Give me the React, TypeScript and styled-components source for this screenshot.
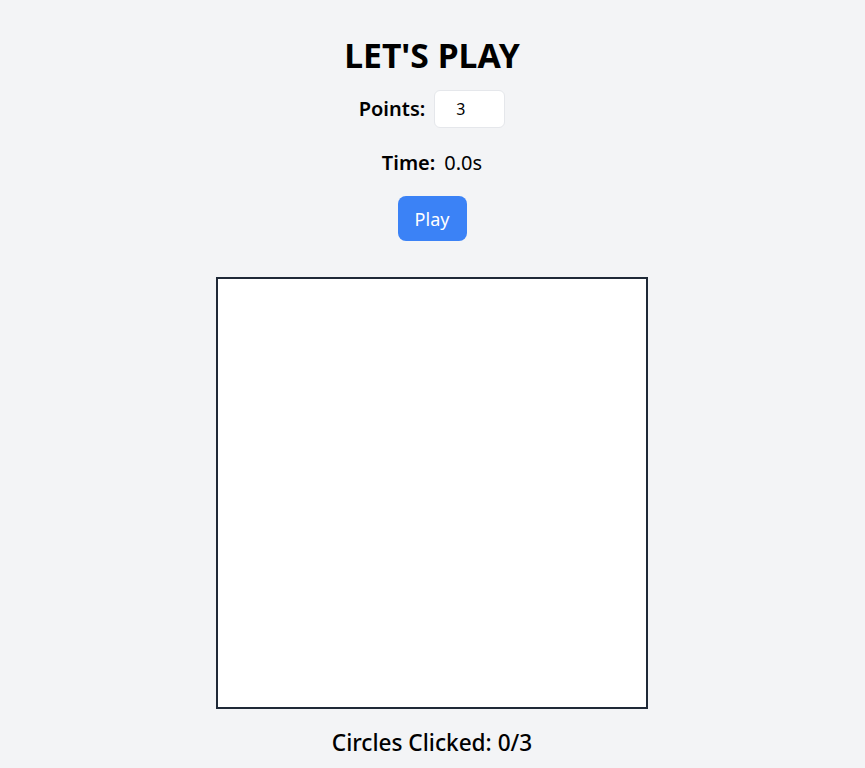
import React from "react";
import styled, { createGlobalStyle } from "styled-components";

const Global = createGlobalStyle`
  html, body { margin: 0; padding: 0; background: #f3f4f6; }
  body { font-family: "Noto Sans", "Open Sans", sans-serif; color: #000; }
  * { box-sizing: border-box; }
`;

const Page = styled.main`
  display: flex;
  flex-direction: column;
  align-items: center;
  padding: 35px 1px 0 0;
  min-height: 768px;
`;

const Title = styled.h1`
  margin: 0;
  font-size: 33.7px;
  line-height: 40px;
  font-weight: 700;
`;

const Row = styled.div<{ $mt: number }>`
  display: flex;
  align-items: center;
  gap: 9px;
  margin-top: ${(p) => p.$mt}px;
  font-size: 20px;
  line-height: 28px;
`;

const Label = styled.span`
  font-weight: 600;
`;

const Value = styled.span`
  font-weight: 400;
`;

const NumberInput = styled.input`
  width: 71px;
  height: 38px;
  border: 1px solid #e5e7eb;
  border-radius: 6px;
  background: #fff;
  font-family: inherit;
  font-size: 16px;
  padding: 0 0 0 21px;
  color: #000;
  outline: none;
`;

const PlayButton = styled.button`
  margin-top: 19px;
  width: 69px;
  height: 45px;
  border: none;
  border-radius: 8px;
  background: #3b82f6;
  color: #fff;
  font-family: inherit;
  font-size: 18px;
  cursor: pointer;
`;

const Board = styled.div`
  margin-top: 36px;
  width: 432px;
  height: 432px;
  background: #fff;
  border: 2px solid #1f2937;
`;

const Footer = styled.p`
  margin: 18px 0 0;
  font-size: 22.6px;
  line-height: 32px;
  font-weight: 500;
`;

export default function App() {
  return (
    <>
      <Global />
      <Page>
        <Title>LET'S PLAY</Title>
        <Row $mt={15}>
          <Label>Points:</Label>
          <NumberInput type="text" defaultValue="3" />
        </Row>
        <Row $mt={21}>
          <Label>Time:</Label>
          <Value>0.0s</Value>
        </Row>
        <PlayButton>Play</PlayButton>
        <Board />
        <Footer>Circles Clicked: 0/3</Footer>
      </Page>
    </>
  );
}
